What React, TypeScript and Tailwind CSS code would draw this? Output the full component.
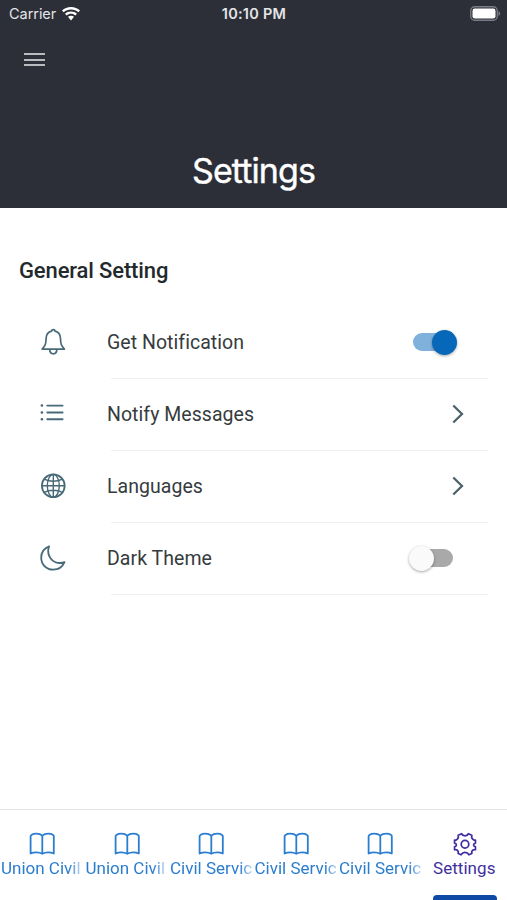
import React, { useState } from 'react';

// ── Icons ─────────────────────────────────────────────────────────────────────

interface IconProps {
  className?: string;
}

const WifiIcon: React.FC<IconProps> = ({ className }) => (
  <svg viewBox="0 0 18 14" className={className} fill="currentColor">
    <path d="M9 0C5.500 0 2.300 1.300 0 3.500L1.700 5.300C3.600 3.500 6.200 2.500 9 2.500s5.400 1 7.300 2.800L18 3.500C15.700 1.300 12.500 0 9 0Z" />
    <path d="M9 4.400C6.700 4.400 4.600 5.300 3 6.700l1.700 1.700C5.900 7.400 7.400 6.800 9 6.800s3.100.6 4.300 1.600L15 6.700C13.400 5.300 11.300 4.400 9 4.400Z" />
    <path d="M9 8.700c-1.200 0-2.200.4-3 1.100l3 3.600 3-3.600c-.8-.7-1.800-1.100-3-1.100Z" />
  </svg>
);

const BatteryIcon: React.FC<IconProps> = ({ className }) => (
  <svg viewBox="0 0 31 15" className={className}>
    <rect x="0.750" y="0.750" width="26.500" height="13.500" rx="4" fill="none" stroke="#7b7e85" strokeWidth="1.300" />
    <rect x="2.500" y="2.500" width="23" height="10" rx="2.200" fill="white" />
    <path d="M28.500 5v5c1-.5 1.600-1.400 1.600-2.500S29.500 5.500 28.500 5Z" fill="#7b7e85" />
  </svg>
);

const BellIcon: React.FC<IconProps> = ({ className }) => (
  <svg viewBox="0 0 28 28" className={className} fill="none" stroke="currentColor" strokeWidth="1.700" strokeLinejoin="round">
    <path d="M14.300 1.600c-1 0-1.600.6-1.700 1.500C9 4 7.200 6.800 7.100 10.400c-.1 5.500-.8 7.400-3.900 10.700h22.200c-3.100-3.300-3.800-5.200-3.900-10.700-.1-3.600-1.900-6.400-5.500-7.300-.1-.9-.7-1.500-1.700-1.500Z" />
    <path d="M10.700 21.400c.2 2.900 1.600 4.400 3.600 4.400s3.400-1.500 3.600-4.400" />
  </svg>
);

const ListIcon: React.FC<IconProps> = ({ className }) => (
  <svg viewBox="0 0 28 28" className={className} fill="none" stroke="currentColor" strokeWidth="1.900" strokeLinecap="round">
    <path d="M8.300 5.600h15.300M8.300 12.500h15.300M8.300 19.300h15.300" />
    <path d="M2.800 5.600h.2M2.800 12.500h.2M2.800 19.300h.2" strokeWidth="2.500" />
  </svg>
);

const GlobeIcon: React.FC<IconProps> = ({ className }) => (
  <svg viewBox="0 0 28 28" className={className} fill="none" stroke="currentColor" strokeWidth="1.400">
    <circle cx="14.300" cy="13.800" r="11.400" strokeWidth="1.800" />
    <ellipse cx="14.300" cy="13.800" rx="6" ry="11.400" />
    <path d="M14.300 2.400v22.800M2.900 13.800h22.800M5.300 7.200c5.200 2.800 12.800 2.800 18 0M5.300 20.400c5.200-2.800 12.800-2.800 18 0" />
  </svg>
);

const MoonIcon: React.FC<IconProps> = ({ className }) => (
  <svg viewBox="0 0 28 28" className={className} fill="none" stroke="currentColor" strokeWidth="1.800" strokeLinejoin="round">
    <path d="M10.100 2.300C5.200 4.100 2.200 8.600 2.200 13.700c0 6.800 5.300 12 12 12 5 0 9.300-2.800 11.300-7.500-1.500.6-2.800.8-4.400.8-6.700 0-11.900-5.200-11.900-11.900 0-1.700.2-3.300.9-4.800Z" />
  </svg>
);

const ChevronIcon: React.FC<IconProps> = ({ className }) => (
  <svg viewBox="0 0 12 20" className={className} fill="none" stroke="currentColor" strokeWidth="2.200">
    <path d="M1.300 1.500 10 10l-8.700 8.500" />
  </svg>
);

const BookIcon: React.FC<IconProps> = ({ className }) => (
  <svg viewBox="0 0 26 24" className={className} fill="none" stroke="currentColor" strokeWidth="1.800" strokeLinejoin="round">
    <path d="M13.300 3.700C11.800 2.300 9.700 1.700 7.400 1.700c-2 0-3.700.4-5 1.300-.5.300-.8.700-.8 1.300v17.200c1.600-.7 3.500-1.100 5.600-1.100 2.400 0 4.600.5 6.100 1.400 1.500-.9 3.500-1.400 5.900-1.400 2.100 0 4 .4 5.600 1.100V4.300c0-.6-.2-1-.7-1.300-1.300-.9-3-1.300-4.900-1.300-2.400 0-4.400.6-5.900 2Z" />
    <path d="M13.300 3.700v18.100" />
  </svg>
);

const GearIcon: React.FC<IconProps> = ({ className }) => (
  <svg viewBox="0 0 26 26" className={className} fill="none" stroke="currentColor" strokeWidth="1.900" strokeLinejoin="round">
    <path d="M9.300 1.900c.8 1.500 2.100 2.400 3.700 2.400s2.900-.9 3.700-2.400l3.700 1.600c-.5 1.600-.2 3.100.9 4.200 1.100 1.100 2.500 1.300 3 1.100v3.300c-1.300.3-2 1-2 1.900s.8 1.600 2 2.100v3.100c-1.500-.3-2.400.1-3.200.8-.9.900-1.100 1.900-.7 3.200l-3.100 1.500c-1-1.600-2.600-2.500-4.300-2.500s-3.300.9-4.300 2.500l-3.100-1.500c.4-1.300.2-2.300-.7-3.200-.8-.7-1.700-1.100-3.200-.8v-3.100c1.200-.5 2-1.200 2-2.100s-.7-1.600-2-1.900V8.800c.5.200 1.900 0 3-1.100 1.100-1.100 1.400-2.600.9-4.200Z" />
    <circle cx="13" cy="13.300" r="4.100" />
  </svg>
);

// ── Shared sub-components ─────────────────────────────────────────────────────

interface ToggleProps {
  label: string;
  checked: boolean;
  onChange: (next: boolean) => void;
}

const Toggle: React.FC<ToggleProps> = ({ label, checked, onChange }) => (
  <button
    type="button"
    role="switch"
    aria-label={label}
    aria-checked={checked}
    onClick={() => onChange(!checked)}
    className={`mb-px flex h-[18px] w-[42px] items-center rounded-full ${
      checked ? 'mr-[52px] justify-end bg-[#7fb1dc]' : 'mr-[54px] justify-start bg-[#a9a9a9]'
    }`}
  >
    <span
      className={`size-[25px] shrink-0 rounded-full shadow-[0_1px_3px_rgba(0,0,0,0.35)] ${
        checked ? '-mr-[2px] bg-[#0767b8]' : '-ml-[2px] bg-[#fafafa]'
      }`}
    />
  </button>
);

interface SettingRowProps {
  icon: React.ReactNode;
  label: string;
  children: React.ReactNode;
}

const SettingRow: React.FC<SettingRowProps> = ({ icon, label, children }) => (
  <li className="flex h-[71px] pl-[39px]">
    <span className="flex w-[68px] items-center pb-px text-[#486a78]">{icon}</span>
    <div className="flex flex-1 items-center justify-between">
      <span className="text-[19.5px] tracking-[0.04px] text-[#363b3e]">{label}</span>
      {children}
    </div>
  </li>
);

const Divider = () => <li className="mr-[19px] ml-[111px] h-px bg-[#efefef]" />;

// ── Main component ────────────────────────────────────────────────────────────

const tabs = ['Union Civil', 'Union Civil', 'Civil Servic', 'Civil Servic', 'Civil Servic'];

const App: React.FC = () => {
  const [notify, setNotify] = useState(true);
  const [dark, setDark] = useState(false);

  return (
    <div className="flex h-[900px] w-[507px] flex-col overflow-hidden bg-white font-['Roboto',sans-serif]">
      <header className="flex h-[208px] flex-col bg-[#2c2f38] text-white">
        {/* Status bar */}
        <div className="grid h-7 grid-cols-3 items-center pr-[6px] pl-[9px] font-['Inter',sans-serif] text-[14.5px] text-[#e4e5e7]">
          <div className="flex items-center gap-[6px]">
            <span className="tracking-[-0.05px]">Carrier</span>
            <WifiIcon className="-mt-px h-[14px] w-[18px] text-white" />
          </div>
          <span className="-ml-[2px] text-center font-semibold tracking-[0.25px]">10:10 PM</span>
          <BatteryIcon className="-mt-px h-[15px] w-[31px] justify-self-end" />
        </div>

        <button type="button" aria-label="Menu" className="mt-[25px] ml-6 flex w-[21px] flex-col gap-[3.500px]">
          <span className="h-[2px] w-full bg-[#b9bbbe]" />
          <span className="h-[2px] w-full bg-[#b9bbbe]" />
          <span className="h-[2px] w-full bg-[#b9bbbe]" />
        </button>

        <h1 className="mt-auto mb-4 text-center font-['Inter',sans-serif] text-[34px] leading-[42px] tracking-[-0.9px] [-webkit-text-stroke:0.4px_white]">
          Settings
        </h1>
      </header>

      <main className="flex-1">
        <h2 className="mt-[49px] ml-[19px] text-[22px] leading-[28px] font-medium tracking-[-0.13px] text-[#23292c]">
          General Setting
        </h2>
        <ul className="mt-[22px]">
          <SettingRow icon={<BellIcon className="size-7" />} label="Get Notification">
            <Toggle label="Get Notification" checked={notify} onChange={setNotify} />
          </SettingRow>
          <Divider />
          <SettingRow icon={<ListIcon className="size-7" />} label="Notify Messages">
            <ChevronIcon className="mr-[43px] mb-px h-5 w-3 text-[#486068]" />
          </SettingRow>
          <Divider />
          <SettingRow icon={<GlobeIcon className="size-7" />} label="Languages">
            <ChevronIcon className="mr-[43px] mb-px h-5 w-3 text-[#486068]" />
          </SettingRow>
          <Divider />
          <SettingRow icon={<MoonIcon className="size-7" />} label="Dark Theme">
            <Toggle label="Dark Theme" checked={dark} onChange={setDark} />
          </SettingRow>
          <Divider />
        </ul>
      </main>

      <nav className="grid h-[91px] grid-cols-6 border-t border-[#e4e4e4] text-[17px] leading-5 text-[#2b7dd0]">
        {tabs.map((label, i) => (
          <button key={i} type="button" className="flex min-w-0 flex-col items-start pt-[22px] pl-px">
            <BookIcon className="ml-7 h-6 w-[26px]" />
            <span className="mt-[2px] whitespace-nowrap [mask-image:linear-gradient(to_right,black_85%,rgba(0,0,0,0.3))]">
              {label}
            </span>
          </button>
        ))}
        <button type="button" className="flex min-w-0 flex-col items-center pt-[22px] text-[#3f2f9e]">
          <GearIcon className="size-6" />
          <span className="mt-[2px] mr-px tracking-[0.05px]">Settings</span>
          <span className="mt-auto h-[5px] w-16 rounded-t-[4px] bg-[#0e49a6]" />
        </button>
      </nav>
    </div>
  );
};

export default App;
